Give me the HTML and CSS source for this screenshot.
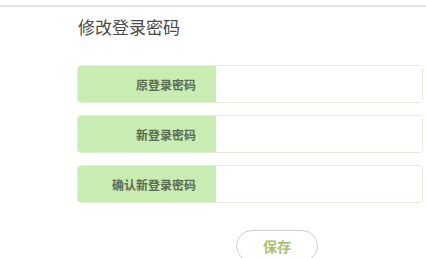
FILE: index.html
```html
<!DOCTYPE html>
<html lang="zh-CN">
<head>
    <meta charset="UTF-8">
    <meta name="viewport" content="width=device-width, initial-scale=1.0">
    <link rel="stylesheet" href="styles.css">
    <title>修改登录密码</title>
</head>
<body>
    <div class="topbar"></div>

    <main class="panel">
        <!-- Title -->
        <h2 class="title">修改登录密码</h2>

        <!-- Password form -->
        <form class="pwd-form" onsubmit="return false">
            <div class="row">
                <label class="label" for="old">原登录密码</label>
                <input class="field" id="old" type="password">
            </div>
            <div class="row">
                <label class="label" for="new">新登录密码</label>
                <input class="field" id="new" type="password">
            </div>
            <div class="row">
                <label class="label" for="confirm">确认新登录密码</label>
                <input class="field" id="confirm" type="password">
            </div>

            <div class="actions">
                <button class="save" type="submit">保存</button>
            </div>
        </form>
    </main>
</body>
</html>
```

FILE: styles.css
```css
/* Reset default styles */
body, h2, form {
    margin: 0;
    padding: 0;
}

body {
    background-color: #fff;
    font-family: "Noto Sans CJK SC", "Noto Sans", sans-serif;
    width: 426px;
    height: 258px;
    overflow: hidden;
}

/* Thin grey line at the top */
.topbar {
    margin-top: 5px;
    height: 2px;
    background-color: #e2e2e2;
}

.panel {
    padding: 0 3px 0 77px;
}

.title {
    font-size: 17px;
    font-weight: normal;
    color: #4a4a4a;
    line-height: 24px;
    margin-top: 8px;
    padding-left: 1px;
}

.pwd-form {
    display: flex;
    flex-direction: column;
    gap: 12px;
    margin-top: 26px;
}

/* One label + input line */
.row {
    display: flex;
    height: 38px;
    border: 1px solid #e6ead9;
    border-radius: 4px;
    overflow: hidden;
    box-sizing: border-box;
}

.label {
    width: 138px;
    flex-shrink: 0;
    background-color: #c9ecb2;
    color: #5b6a50;
    font-size: 12px;
    font-weight: bold;
    text-align: right;
    padding-right: 20px;
    box-sizing: border-box;
    display: flex;
    align-items: center;
    justify-content: flex-end;
}

.field {
    flex: 1;
    border: none;
    outline: none;
    background-color: #fff;
    min-width: 0;
}

.actions {
    display: flex;
    padding-left: 159px;
    margin-top: 15px;
}

.save {
    width: 82px;
    height: 32px;
    border: 1.5px solid #cfcfcf;
    border-radius: 16px;
    background-color: #fff;
    color: #a6c36b;
    font-family: "Noto Sans CJK SC", sans-serif;
    font-size: 14px;
    font-weight: bold;
    cursor: pointer;
}
```
